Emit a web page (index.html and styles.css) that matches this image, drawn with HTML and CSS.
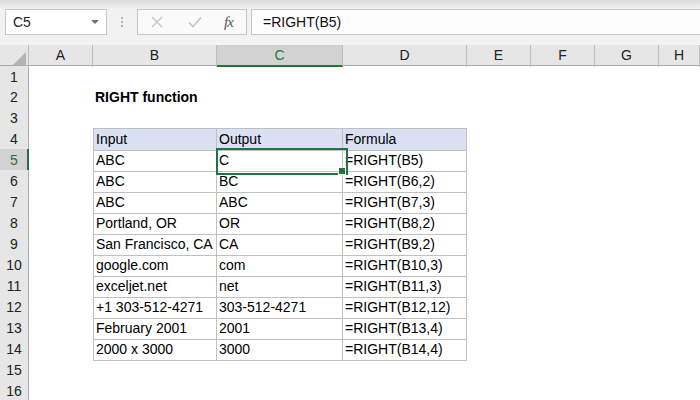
FILE: index.html
```html
<!DOCTYPE html>
<html>
<head>
<meta charset="utf-8">
<link rel="stylesheet" href="styles.css">
</head>
<body>
<div class="app">
  <div class="toolbar">
    <div class="namebox">
      <span class="name">C5</span>
      <svg class="caret" width="8" height="5" viewBox="0 0 8 5"><path d="M0 0 L8 0 L4 4 Z" fill="#707070"/></svg>
    </div>
    <div class="dots"><i></i><i></i><i></i></div>
    <div class="fxbox">
      <svg class="ico" width="12" height="12" viewBox="0 0 12 12"><path d="M1 1 L11 11 M11 1 L1 11" stroke="#c4c4c4" stroke-width="1.3" fill="none"/></svg>
      <svg class="ico" width="14" height="12" viewBox="0 0 14 12"><path d="M1 6.5 L5 10.5 L13 1.5" stroke="#c4c4c4" stroke-width="1.6" fill="none"/></svg>
      <span class="fx">fx</span>
    </div>
    <div class="formula">=RIGHT(B5)</div>
  </div>
  <div class="sheet">
    <div class="row head">
      <div class="corner"><span class="tri"></span></div>
      <div class="ch">A</div><div class="ch">B</div><div class="ch sel">C</div><div class="ch">D</div><div class="ch">E</div><div class="ch">F</div><div class="ch">G</div><div class="ch">H</div>
    </div>
    <div class="row r1"><div class="rh">1</div><div></div><div></div><div></div><div></div><div></div><div></div><div></div><div></div></div>
    <div class="row"><div class="rh">2</div><div></div><div class="c title">RIGHT function</div><div></div><div></div><div></div><div></div><div></div><div></div></div>
    <div class="row"><div class="rh">3</div><div></div><div></div><div></div><div></div><div></div><div></div><div></div><div></div></div>
    <div class="row"><div class="rh">4</div><div></div><div class="c t tl th">Input</div><div class="c t th">Output</div><div class="c t th">Formula</div><div></div><div></div><div></div><div></div></div>
    <div class="row"><div class="rh rsel">5</div><div></div><div class="c t tl">ABC</div><div class="c t active">C<span class="handle"></span></div><div class="c t">=RIGHT(B5)</div><div></div><div></div><div></div><div></div></div>
    <div class="row"><div class="rh">6</div><div></div><div class="c t tl">ABC</div><div class="c t">BC</div><div class="c t">=RIGHT(B6,2)</div><div></div><div></div><div></div><div></div></div>
    <div class="row"><div class="rh">7</div><div></div><div class="c t tl">ABC</div><div class="c t">ABC</div><div class="c t">=RIGHT(B7,3)</div><div></div><div></div><div></div><div></div></div>
    <div class="row"><div class="rh">8</div><div></div><div class="c t tl">Portland, OR</div><div class="c t">OR</div><div class="c t">=RIGHT(B8,2)</div><div></div><div></div><div></div><div></div></div>
    <div class="row"><div class="rh">9</div><div></div><div class="c t tl">San Francisco, CA</div><div class="c t">CA</div><div class="c t">=RIGHT(B9,2)</div><div></div><div></div><div></div><div></div></div>
    <div class="row"><div class="rh">10</div><div></div><div class="c t tl">google.com</div><div class="c t">com</div><div class="c t">=RIGHT(B10,3)</div><div></div><div></div><div></div><div></div></div>
    <div class="row"><div class="rh">11</div><div></div><div class="c t tl">exceljet.net</div><div class="c t">net</div><div class="c t">=RIGHT(B11,3)</div><div></div><div></div><div></div><div></div></div>
    <div class="row"><div class="rh">12</div><div></div><div class="c t tl">+1 303-512-4271</div><div class="c t">303-512-4271</div><div class="c t">=RIGHT(B12,12)</div><div></div><div></div><div></div><div></div></div>
    <div class="row"><div class="rh">13</div><div></div><div class="c t tl">February 2001</div><div class="c t">2001</div><div class="c t">=RIGHT(B13,4)</div><div></div><div></div><div></div><div></div></div>
    <div class="row"><div class="rh">14</div><div></div><div class="c t tl">2000 x 3000</div><div class="c t">3000</div><div class="c t">=RIGHT(B14,4)</div><div></div><div></div><div></div><div></div></div>
    <div class="row"><div class="rh">15</div><div></div><div></div><div></div><div></div><div></div><div></div><div></div><div></div></div>
    <div class="row"><div class="rh">16</div><div></div><div></div><div></div><div></div><div></div><div></div><div></div><div></div></div>
  </div>
</div>
</body>
</html>
```

FILE: styles.css
```css
* { box-sizing: border-box; }
html, body { margin: 0; padding: 0; }
body {
  width: 700px;
  height: 400px;
  overflow: hidden;
  background: #fff;
  font-family: "Liberation Sans", Arial, sans-serif;
  color: #000;
}
.app { width: 700px; height: 400px; overflow: hidden; }

.toolbar {
  height: 45px;
  display: flex;
  align-items: flex-start;
  padding-top: 9px;
  background: linear-gradient(#d9d9d9 0px, #e9e9e9 5px, #f1f1f1 9px, #f3f3f3 45px);
}
.namebox {
  margin-left: 5px;
  width: 102px;
  height: 26px;
  background: #fff;
  border: 1px solid #c6c6c6;
  display: flex;
  align-items: center;
  justify-content: space-between;
  padding: 0 7px 0 7px;
}
.name { font-size: 14px; color: #222; }
.caret { display: block; margin-top: 1px; }
.dots {
  width: 30px;
  height: 26px;
  display: flex;
  flex-direction: column;
  align-items: center;
  justify-content: center;
  gap: 2px;
}
.dots i {
  display: block;
  width: 2px;
  height: 2px;
  background: #b5b5b5;
}
.fxbox {
  width: 110px;
  height: 26px;
  background: #fafafa;
  border: 1px solid #c6c6c6;
  display: flex;
  align-items: center;
  padding-left: 13px;
}
.fxbox .ico { display: block; }
.fxbox .ico + .ico { margin-left: 25px; }
.fx {
  margin-left: 22px;
  font-family: "Liberation Serif", "Times New Roman", serif;
  font-style: italic;
  font-size: 15px;
  color: #555;
  letter-spacing: -1px;
}
.formula {
  margin-left: 4px;
  flex: 1;
  height: 26px;
  background: #fdfdfd;
  border: 1px solid #c6c6c6;
  border-right: none;
  font-size: 14px;
  line-height: 24px;
  padding-left: 11px;
  color: #111;
}

.sheet { display: flex; flex-direction: column; }
.row {
  display: grid;
  grid-template-columns: 29px 64px 124px 126px 124px 64px 64px 64px 41px;
  height: 21px;
}
.row.r1 { height: 20px; }
.row.head {
  height: 21px;
  background: #e6e6e6;
  border-bottom: 1px solid #ababab;
}
.corner {
  position: relative;
  border-right: 1px solid #bdbdbd;
}
.tri {
  position: absolute;
  right: 2px;
  bottom: 2px;
  width: 0;
  height: 0;
  border-left: 13px solid transparent;
  border-bottom: 13px solid #b4b4b4;
}
.ch {
  border-right: 1px solid #bdbdbd;
  text-align: center;
  font-size: 14px;
  line-height: 21px;
  color: #222;
}
.ch.sel {
  background: #d2d2d2;
  color: #217346;
  border-bottom: 2px solid #217346;
  line-height: 20px;
}
.rh {
  background: #e6e6e6;
  border-right: 1px solid #ababab;
  border-bottom: 1px solid #d4d4d4;
  text-align: center;
  font-size: 14px;
  line-height: 22px;
  color: #222;
}
.rh.rsel {
  background: #d2d2d2;
  color: #217346;
  border-right: 2px solid #217346;
  padding-left: 1px;
}

.c {
  font-size: 14px;
  line-height: 22px;
  padding-left: 2px;
  white-space: nowrap;
  overflow: visible;
}
.title { font-weight: bold; }
.t {
  border-right: 1px solid #c0c0c0;
  border-bottom: 1px solid #c0c0c0;
  overflow: hidden;
}
.tl { border-left: 1px solid #c0c0c0; }
.th {
  background: #d9e1f2;
  border-top: 1px solid #c0c0c0;
  line-height: 20px;
}
.active { position: relative; overflow: visible; }
.active::after {
  content: "";
  position: absolute;
  left: -1px;
  top: -1px;
  width: 128px;
  height: 23px;
  border: 2px solid #217346;
}
.handle {
  position: absolute;
  right: -4px;
  bottom: -4px;
  width: 6px;
  height: 6px;
  background: #217346;
  border: 1px solid #fff;
  z-index: 2;
  box-sizing: content-box;
}
```
